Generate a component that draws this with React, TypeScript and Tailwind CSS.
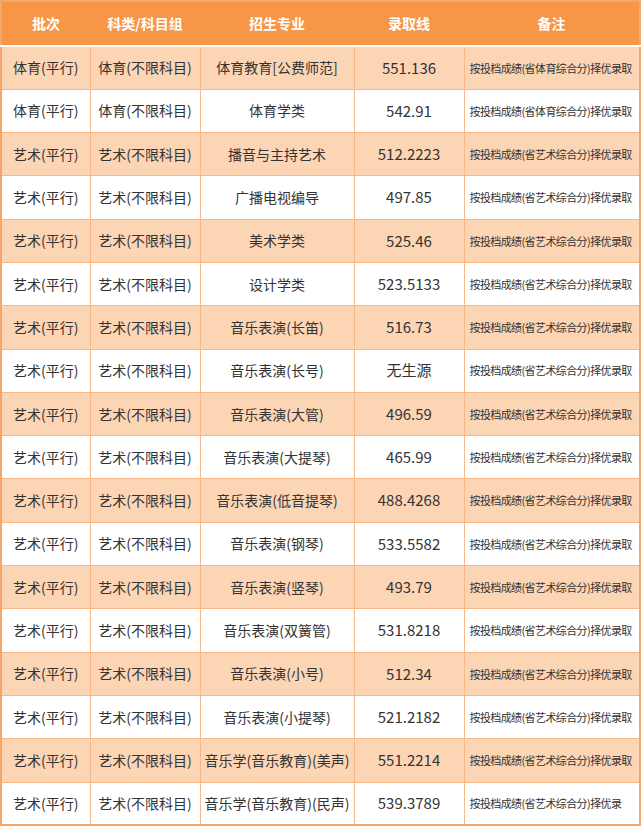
const rows: [string, string, string, string, string][] = [
  ["体育(平行)", "体育(不限科目)", "体育教育[公费师范]", "551.136", "按投档成绩(省体育综合分)择优录取"],
  ["体育(平行)", "体育(不限科目)", "体育学类", "542.91", "按投档成绩(省体育综合分)择优录取"],
  ["艺术(平行)", "艺术(不限科目)", "播音与主持艺术", "512.2223", "按投档成绩(省艺术综合分)择优录取"],
  ["艺术(平行)", "艺术(不限科目)", "广播电视编导", "497.85", "按投档成绩(省艺术综合分)择优录取"],
  ["艺术(平行)", "艺术(不限科目)", "美术学类", "525.46", "按投档成绩(省艺术综合分)择优录取"],
  ["艺术(平行)", "艺术(不限科目)", "设计学类", "523.5133", "按投档成绩(省艺术综合分)择优录取"],
  ["艺术(平行)", "艺术(不限科目)", "音乐表演(长笛)", "516.73", "按投档成绩(省艺术综合分)择优录取"],
  ["艺术(平行)", "艺术(不限科目)", "音乐表演(长号)", "无生源", "按投档成绩(省艺术综合分)择优录取"],
  ["艺术(平行)", "艺术(不限科目)", "音乐表演(大管)", "496.59", "按投档成绩(省艺术综合分)择优录取"],
  ["艺术(平行)", "艺术(不限科目)", "音乐表演(大提琴)", "465.99", "按投档成绩(省艺术综合分)择优录取"],
  ["艺术(平行)", "艺术(不限科目)", "音乐表演(低音提琴)", "488.4268", "按投档成绩(省艺术综合分)择优录取"],
  ["艺术(平行)", "艺术(不限科目)", "音乐表演(钢琴)", "533.5582", "按投档成绩(省艺术综合分)择优录取"],
  ["艺术(平行)", "艺术(不限科目)", "音乐表演(竖琴)", "493.79", "按投档成绩(省艺术综合分)择优录取"],
  ["艺术(平行)", "艺术(不限科目)", "音乐表演(双簧管)", "531.8218", "按投档成绩(省艺术综合分)择优录取"],
  ["艺术(平行)", "艺术(不限科目)", "音乐表演(小号)", "512.34", "按投档成绩(省艺术综合分)择优录取"],
  ["艺术(平行)", "艺术(不限科目)", "音乐表演(小提琴)", "521.2182", "按投档成绩(省艺术综合分)择优录取"],
  ["艺术(平行)", "艺术(不限科目)", "音乐学(音乐教育)(美声)", "551.2214", "按投档成绩(省艺术综合分)择优录取"],
  ["艺术(平行)", "艺术(不限科目)", "音乐学(音乐教育)(民声)", "539.3789", "按投档成绩(省艺术综合分)择优录"],
]

const headers = ["批次", "科类/科目组", "招生专业", "录取线", "备注"]

export default function App() {
  return (
    <div
      className="w-[641px] bg-white text-[#333333]"
      style={{ fontFamily: '"Noto Sans CJK SC", "Noto Sans", sans-serif' }}
    >
      <table className="w-[639px] table-fixed border-collapse border-2 border-[#f5a66a]">
        <colgroup>
          <col className="w-[89px]" />
          <col className="w-[110px]" />
          <col className="w-[154px]" />
          <col className="w-[110px]" />
          <col className="w-[176px]" />
        </colgroup>
        <thead>
          <tr className="h-[45px] border-b-2 border-white bg-[#f79646]">
            {headers.map((h) => (
              <th key={h} className="p-0 text-center text-[14px] font-bold text-white">
                {h}
              </th>
            ))}
          </tr>
        </thead>
        <tbody>
          {rows.map((r, i) => (
            <tr key={i} className={i % 2 === 0 ? "h-[43.3px] bg-[#fcd5b5]" : "h-[43.3px] bg-white"}>
              <td className="border border-[#f7b98a] p-0 text-center text-[14px]">{r[0]}</td>
              <td className="border border-[#f7b98a] p-0 text-center text-[14px]">{r[1]}</td>
              <td className="border border-[#f7b98a] p-0 text-center text-[14px] whitespace-nowrap">{r[2]}</td>
              <td className="border border-[#f7b98a] p-0 text-center text-[15px]">{r[3]}</td>
              <td className="overflow-hidden border border-[#f7b98a] py-0 pl-[5px] pr-0 text-left text-[11px] tracking-[-0.6px] whitespace-nowrap">
                {r[4]}
              </td>
            </tr>
          ))}
        </tbody>
      </table>
    </div>
  )
}
